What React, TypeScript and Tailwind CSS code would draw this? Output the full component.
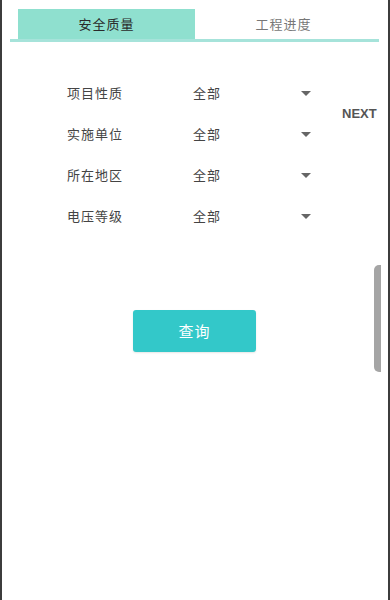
import React from "react";

const rows = ["项目性质", "实施单位", "所在地区", "电压等级"];

export default function App() {
  return (
    <div
      className="relative w-[390px] h-[600px] bg-white border-l-2 border-r-2 border-[#3c3c3c] overflow-hidden"
      style={{ fontFamily: '"Noto Sans CJK SC", "Noto Sans", sans-serif' }}
    >
      <div className="pt-[9px] pl-[8px] pr-[8px]">
        <div className="flex pl-[8px] pr-[8px]">
          <div className="w-[177px] h-[30px] bg-[#8fe0cf] flex items-center justify-center text-[13px] text-[#2a2a2a] tracking-[1px]">
            安全质量
          </div>
          <div className="flex-1 h-[30px] flex items-center justify-center text-[13px] text-[#777] tracking-[1px]">
            工程进度
          </div>
        </div>
        <div className="h-[3px] bg-[#a6e3da] mr-[1px]" />
      </div>

      <div className="pt-[41px] pl-[65px] flex flex-col gap-[21px]">
        {rows.map((r) => (
          <div key={r} className="flex items-center h-[20px]">
            <div className="w-[126px] text-[13px] text-[#444] tracking-[1px]">{r}</div>
            <div className="w-[108px] text-[13px] text-[#444] tracking-[1px]">全部</div>
            <svg width="10" height="6" viewBox="0 0 10 6" className="mt-[1px]">
              <path d="M0 0 L10 0 L5 5 Z" fill="#666" />
            </svg>
          </div>
        ))}
      </div>

      <div className="absolute left-[340px] top-[104px] text-[13px] font-semibold text-[#555]" style={{ fontFamily: '"Liberation Sans", Arial, sans-serif' }}>
        NEXT
      </div>

      <div className="absolute left-[372px] top-[265px] w-[7px] h-[107px] bg-[#a5a5a5] rounded-l-[5px]" />

      <div className="flex justify-center pt-[84px] pr-[1px]">
        <div className="w-[123px] h-[42px] rounded-[3px] bg-[#33c8c9] flex items-center justify-center text-[15px] text-white tracking-[1px] shadow-[0_1px_2px_rgba(0,0,0,0.1)]">
          查询
        </div>
      </div>
    </div>
  );
}
